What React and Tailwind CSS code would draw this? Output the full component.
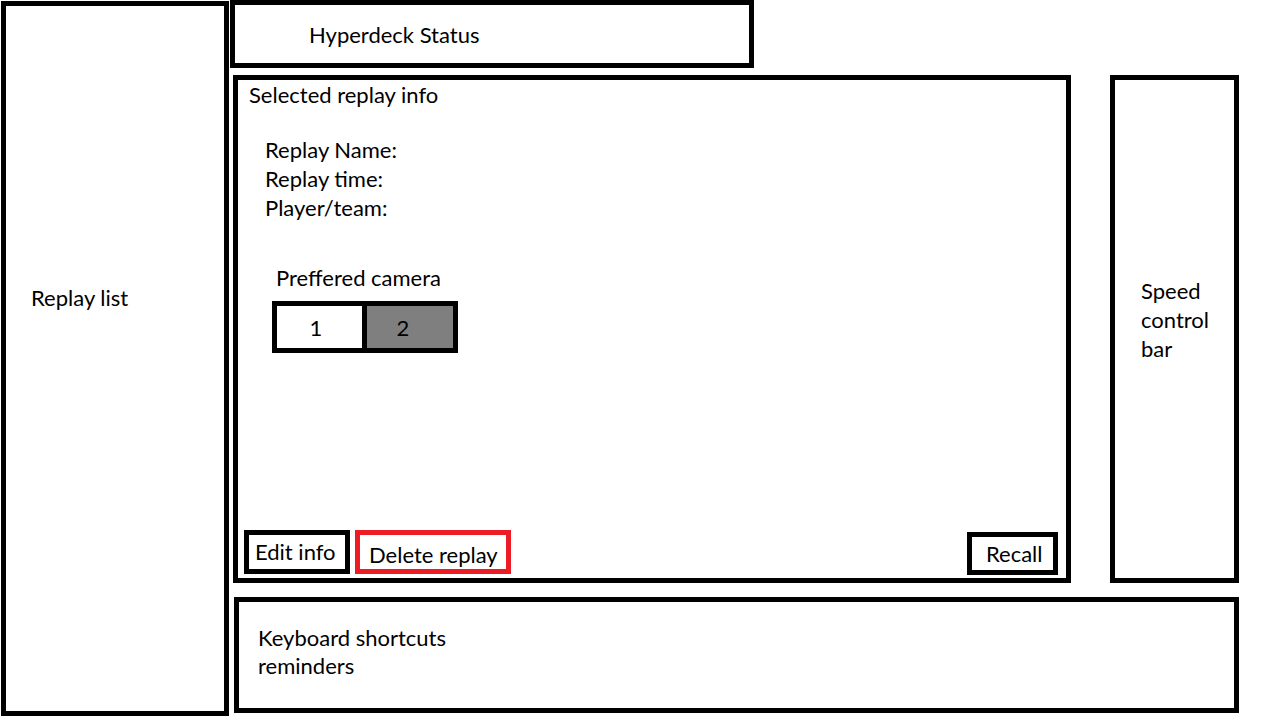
export default function App() {
  const font = { fontFamily: 'Lato, "Noto Sans", sans-serif' };
  return (
    <div className="w-[1280px] h-[720px] bg-white flex text-black text-[22px] leading-[29px]" style={font}>
      <div className="ml-[1px] mt-[1px] w-[228px] h-[715px] border-[5px] border-black pl-[25px] pt-[277px]">
        Replay list
      </div>
      <div className="ml-[1px] flex flex-col">
        <div className="w-[524px] h-[68px] border-[5px] border-black pl-[74px] pt-[15px]">
          Hyperdeck Status
        </div>
        <div className="mt-[7px] ml-[3px] flex">
          <div className="w-[838px] h-[508px] border-[5px] border-black flex flex-col">
            <div className="pl-[11px] pt-0">Selected replay info</div>
            <div className="pl-[27px] mt-[26px]">
              <div>Replay Name:</div>
              <div>Replay time:</div>
              <div>Player/team:</div>
            </div>
            <div className="pl-[38px] mt-[41px]">Preffered camera</div>
            <div className="ml-[34px] mt-[9px] flex w-[186px] h-[52px] border-[5px] border-black">
              <div className="w-[85px] h-full bg-white flex items-center justify-center pr-[7px]">1</div>
              <div className="w-[5px] h-full bg-black"></div>
              <div className="w-[86px] h-full bg-[#7f7f7f] flex items-center justify-center pr-[14px]">2</div>
            </div>
            <div className="mt-auto flex items-end pl-[6px] pr-[8px] pb-[4px]">
              <div className="w-[106px] h-[44px] border-[5px] border-black pl-[6px] pt-[2px]">Edit info</div>
              <div className="ml-[5px] w-[156px] h-[44px] border-[5px] border-[#ed1c24] pl-[9px] pt-[5px]">Delete replay</div>
              <div className="ml-auto mb-[-1px] w-[91px] h-[43px] border-[5px] border-black pl-[14px] pt-[2px]">Recall</div>
            </div>
          </div>
          <div className="ml-[39px] w-[129px] h-[508px] border-[5px] border-black pl-[26px] pt-[196px]">
            <div>Speed</div>
            <div>control</div>
            <div>bar</div>
          </div>
        </div>
        <div className="mt-[14px] ml-[4px] w-[1005px] h-[116px] border-[5px] border-black pl-[19px] pt-[22px] leading-[28px]">
          <div>Keyboard shortcuts</div>
          <div>reminders</div>
        </div>
      </div>
    </div>
  );
}
